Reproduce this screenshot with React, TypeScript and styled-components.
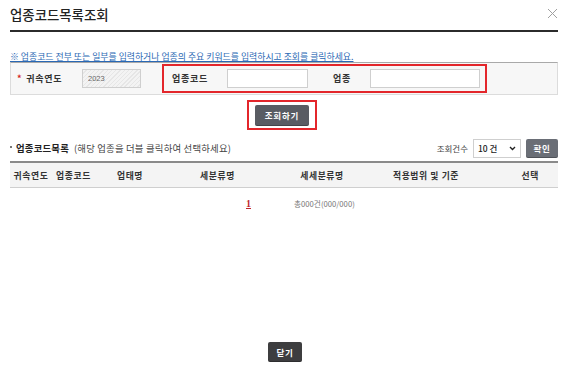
import React from "react";
import styled, { createGlobalStyle } from "styled-components";

const Global = createGlobalStyle`
  html, body { margin: 0; padding: 0; background: #fff; }
  body { font-family: "Noto Sans CJK KR", "Noto Sans", sans-serif; color: #333; }
  * { box-sizing: border-box; }
`;

const Page = styled.div`
  width: 568px;
  height: 369px;
  padding: 0 10px 7px;
  display: flex;
  flex-direction: column;
`;

const Header = styled.div`
  height: 32px;
  border-bottom: 2px solid #2b2b2b;
  display: flex;
  justify-content: space-between;
  align-items: flex-start;
`;

const Title = styled.h1`
  margin: 5px 0 0;
  font-size: 13.4px;
  font-weight: 500;
  line-height: 18px;
  color: #222;
`;

const CloseBtn = styled.button`
  margin: 8px 0 0;
  padding: 0;
  border: 0;
  background: none;
  width: 11px;
  height: 11px;
  display: flex;
`;

const Notice = styled.p`
  margin: 19px 0 0;
  font-size: 8.9px;
  line-height: 11px;
  color: #2a68b4;
  text-decoration: underline;
  white-space: nowrap;
`;

const SearchBox = styled.div`
  height: 33px;
  background: #f7f7f7;
  border: 1px solid #dcdcdc;
  border-top: 1px solid #a9a9a9;
  display: flex;
  align-items: center;
  padding-left: 6px;
`;

const Label = styled.span<{ $w?: number }>`
  font-size: 9px;
  font-weight: 700;
  letter-spacing: 0.7px;
  color: #333;
  width: ${(p) => (p.$w ? `${p.$w}px` : "auto")};
  display: flex;
  align-items: center;
  flex-shrink: 0;
`;

const Star = styled.span`
  color: #d42222;
  font-size: 9px;
  margin-right: 4px;
`;

const TextInput = styled.input<{ $w: number; $hatched?: boolean }>`
  width: ${(p) => p.$w}px;
  height: 19px;
  border: 1px solid #cfcfcf;
  padding: 0 5px;
  font-size: 7.5px;
  font-family: "Liberation Sans", sans-serif;
  color: #666;
  outline: none;
  flex-shrink: 0;
  background: ${(p) =>
    p.$hatched
      ? "repeating-linear-gradient(135deg, #f3f3f3 0 2px, #e6e6e6 2px 3px)"
      : "#fff"};
`;

const Highlight = styled.div`
  margin-left: 21px;
  width: 325px;
  height: 29px;
  border: 2px solid #e3262b;
  display: flex;
  align-items: center;
  padding-left: 8px;
`;

const ButtonRow = styled.div`
  display: flex;
  justify-content: center;
  margin-top: 5px;
  padding-right: 4px;
`;

const RedFrame = styled.div`
  width: 70px;
  height: 30px;
  border: 2px solid #e3262b;
  display: flex;
  align-items: center;
  justify-content: center;
`;

const DarkButton = styled.button<{ $w: number; $h: number; $bg: string }>`
  width: ${(p) => p.$w}px;
  height: ${(p) => p.$h}px;
  background: ${(p) => p.$bg};
  color: #fff;
  border: 0;
  border-radius: 2px;
  font-family: "Noto Sans CJK KR", sans-serif;
  font-size: 8.5px;
  font-weight: 700;
  letter-spacing: 0.8px;
  padding: 0;
  display: flex;
  align-items: center;
  justify-content: center;
  box-shadow: inset 0 -1px 0 rgba(0, 0, 0, 0.25);
`;

const ListHeader = styled.div`
  margin-top: 8px;
  height: 20px;
  display: flex;
  align-items: center;
  justify-content: space-between;
`;

const ListTitle = styled.div`
  display: flex;
  align-items: center;
  font-size: 9.4px;
  color: #444;
  white-space: nowrap;
  letter-spacing: 0.2px;
`;

const Bullet = styled.span`
  width: 2px;
  height: 2px;
  background: #777;
  margin: 0 4px 2px 0;
`;

const Strong = styled.strong`
  font-weight: 700;
  color: #222;
  font-size: 9.4px;
  letter-spacing: 0.2px;
  margin-right: 5px;
`;

const Controls = styled.div`
  display: flex;
  align-items: center;
`;

const SmallLabel = styled.span`
  font-size: 8.5px;
  color: #444;
  margin-right: 5px;
`;

const SelectBox = styled.div`
  width: 48px;
  height: 19px;
  border: 1px solid #cfcfcf;
  background: #fff;
  display: flex;
  align-items: center;
  justify-content: space-between;
  padding: 0 4px 0 4px;
  font-size: 8.5px;
  font-weight: 500;
  color: #222;
  margin-right: 5px;
`;

const Table = styled.div`
  margin-top: 3px;
  border-top: 2px solid #8a8a8a;
`;

const HeadRow = styled.div`
  display: grid;
  grid-template-columns: 42px 43px 70px 105px 104px 104px 80px;
  height: 25px;
  background: #f4f4f4;
  border-bottom: 1px solid #cfcfcf;
`;

const Th = styled.div<{ $align?: string }>`
  display: flex;
  align-items: center;
  justify-content: ${(p) => p.$align || "center"};
  font-size: 8.8px;
  font-weight: 700;
  letter-spacing: 0.6px;
  color: #333;
  white-space: nowrap;
  padding: ${(p) => (p.$align === "flex-end" ? "0 19px 0 0" : "0")};
`;

const Pager = styled.div`
  margin-top: 10px;
  display: flex;
  align-items: center;
  padding-left: 236px;
`;

const PageNum = styled.span`
  font-family: "Liberation Serif", serif;
  font-weight: 700;
  font-size: 10px;
  color: #c0272d;
  text-decoration: underline;
  width: 48px;
`;

const Total = styled.span`
  font-size: 7.7px;
  color: #777;
`;

const Footer = styled.div`
  margin-top: auto;
  display: flex;
  justify-content: center;
  padding-left: 2px;
`;

export default function App() {
  return (
    <Page>
      <Global />
      <Header>
        <Title>업종코드목록조회</Title>
        <CloseBtn aria-label="닫기">
          <svg width="11" height="11" viewBox="0 0 11 11">
            <path d="M1 1 L10 10 M10 1 L1 10" stroke="#a0a0a0" strokeWidth="1" />
          </svg>
        </CloseBtn>
      </Header>
      <Notice>※ 업종코드 전부 또는 일부를 입력하거나 업종의 주요 키워드를 입력하시고 조회를 클릭하세요.</Notice>
      <SearchBox>
        <Label $w={65}>
          <Star>*</Star>귀속연도
        </Label>
        <TextInput $w={59} $hatched readOnly value="2023" />
        <Highlight>
          <Label $w={55}>업종코드</Label>
          <TextInput $w={81} />
          <Label $w={37} style={{ marginLeft: 25 }}>업종</Label>
          <TextInput $w={110} />
        </Highlight>
      </SearchBox>
      <ButtonRow>
        <RedFrame>
          <DarkButton $w={54} $h={21} $bg="#595c63">조회하기</DarkButton>
        </RedFrame>
      </ButtonRow>
      <ListHeader>
        <ListTitle>
          <Bullet />
          <Strong>업종코드목록</Strong>(해당 업종을 더블 클릭하여 선택하세요)
        </ListTitle>
        <Controls>
          <SmallLabel>조회건수</SmallLabel>
          <SelectBox>
            <span>10 건</span>
            <svg width="7" height="5" viewBox="0 0 7 5">
              <path d="M1 1 L3.5 3.5 L6 1" stroke="#222" strokeWidth="1.4" fill="none" />
            </svg>
          </SelectBox>
          <DarkButton $w={32} $h={19} $bg="#6a6e76">확인</DarkButton>
        </Controls>
      </ListHeader>
      <Table>
        <HeadRow>
          <Th>귀속연도</Th>
          <Th>업종코드</Th>
          <Th>업태명</Th>
          <Th>세분류명</Th>
          <Th>세세분류명</Th>
          <Th>적용범위 및 기준</Th>
          <Th $align="flex-end">선택</Th>
        </HeadRow>
      </Table>
      <Pager>
        <PageNum>1</PageNum>
        <Total>총000건(000/000)</Total>
      </Pager>
      <Footer>
        <DarkButton $w={34} $h={20} $bg="#3d3d3f">닫기</DarkButton>
      </Footer>
    </Page>
  );
}
